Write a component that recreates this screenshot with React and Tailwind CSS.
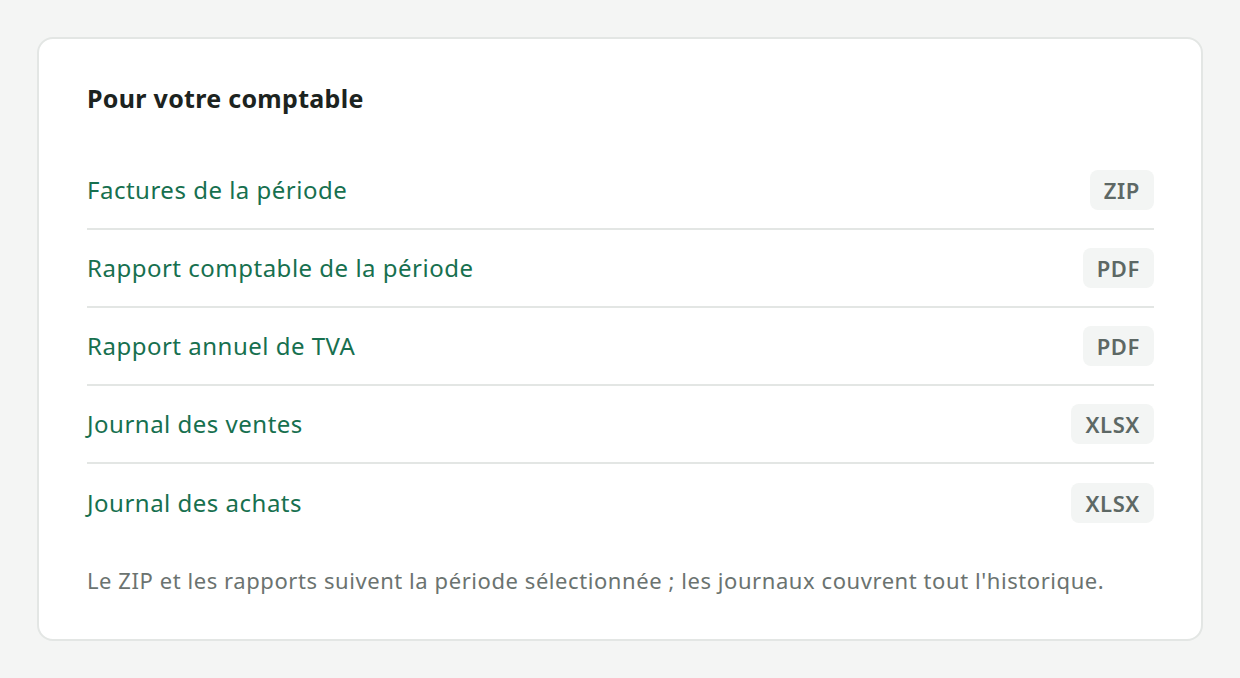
export default function App() {
  const rows = [
    ["Factures de la période", "ZIP"],
    ["Rapport comptable de la période", "PDF"],
    ["Rapport annuel de TVA", "PDF"],
    ["Journal des ventes", "XLSX"],
    ["Journal des achats", "XLSX"],
  ];
  return (
    <div className="min-h-[678px] w-[1240px] bg-[#f4f5f4] pt-[37px] px-[37px]" style={{ fontFamily: '"Noto Sans", "Open Sans", sans-serif' }}>
      <div className="h-[604px] rounded-[16px] border-2 border-[#e3e6e4] bg-white pl-[48px] pr-[47px] pt-[43px]">
        <h2 className="text-[25px] leading-[32px] font-bold tracking-[0.3px] text-[#1c2320]">Pour votre comptable</h2>
        <ul className="mt-[38px]">
          {rows.map(([label, fmt], i) => (
            <li key={label} className={`flex h-[78px] items-center justify-between ${i < rows.length - 1 ? "border-b-2 border-[#e3e6e4]" : ""}`}>
              <span className="text-[24px] leading-[32px] tracking-[0.5px] text-[#17704f]">{label}</span>
              <span className="rounded-[8px] bg-[#f3f5f4] px-[14px] h-[40px] flex items-center text-[22px] tracking-[0.6px] font-semibold text-[#5d6865]">{fmt}</span>
            </li>
          ))}
        </ul>
        <p className="mt-[23px] text-[22px] leading-[30px] tracking-[0.57px] text-[#6b7370]">Le ZIP et les rapports suivent la période sélectionnée ; les journaux couvrent tout l'historique.</p>
      </div>
    </div>
  );
}
